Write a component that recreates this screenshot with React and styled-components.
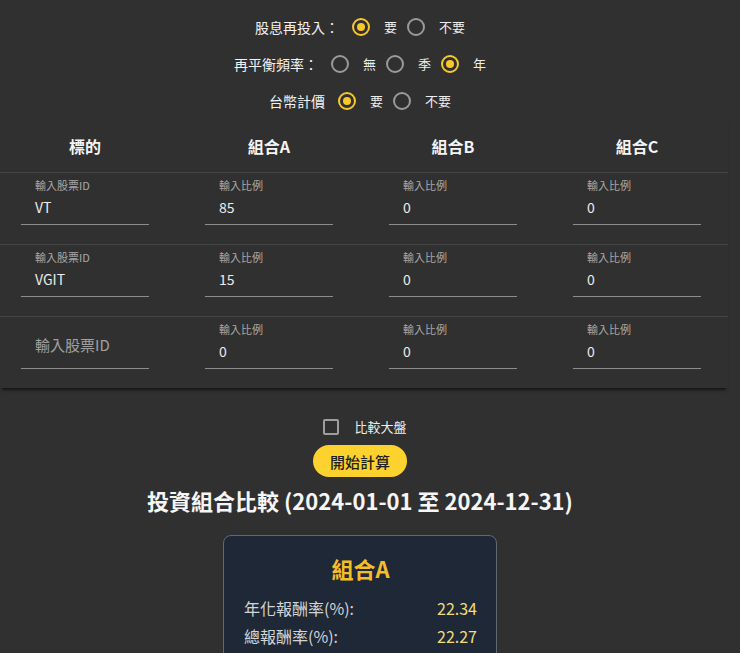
import React from "react";
import styled, { createGlobalStyle } from "styled-components";

const GlobalStyle = createGlobalStyle`
  body {
    margin: 0;
    background-color: #303030;
    font-family: "Noto Sans CJK TC", "Noto Sans", sans-serif;
    color: #f0f0f0;
    overflow: hidden;
  }
`;

const Page = styled.div`
  width: 720px;
  display: flex;
  flex-direction: column;
  align-items: center;
  padding-top: 8px;
`;

/* 上方設定選項 */
const OptionRow = styled.div`
  height: 37px;
  display: flex;
  align-items: center;
  justify-content: center;
`;

const OptionLabel = styled.span`
  font-size: 14px;
  margin-right: 13px;
  color: #f2f2f2;
`;

const RadioCircle = styled.span`
  width: 18px;
  height: 18px;
  box-sizing: border-box;
  border-radius: 50%;
  border: 2px solid ${({ $checked }) => ($checked ? "#f7c72c" : "#9a9a9a")};
  display: inline-flex;
  align-items: center;
  justify-content: center;
  margin-right: 14px;

  &::after {
    content: "";
    width: 8px;
    height: 8px;
    border-radius: 50%;
    background: #f7c72c;
    display: ${({ $checked }) => ($checked ? "block" : "none")};
  }
`;

const RadioText = styled.span`
  font-size: 13px;
  margin-right: 10px;
  color: #eeeeee;

  &:last-child {
    margin-right: 0;
  }
`;

/* 表格區塊 */
const Panel = styled.div`
  width: 728px;
  align-self: flex-start;
  overflow: hidden;
  background-color: #303030;
  box-shadow: 0 4px 3px -2px rgba(0, 0, 0, 0.6);
`;

const Grid = styled.div`
  display: grid;
  grid-template-columns: repeat(4, 184px);
  margin-left: -7px;
`;

const HeadCell = styled.div`
  height: 53px;
  display: flex;
  align-items: center;
  justify-content: center;
  font-size: 16px;
  font-weight: 700;
  color: #f4f4f4;
  border-bottom: 1px solid #444444;
`;

const Cell = styled.div`
  padding: 5px 28px 19px;
  border-bottom: ${({ $last }) => ($last ? "none" : "1px solid #444444")};
`;

const Field = styled.div`
  height: 47px;
  box-sizing: border-box;
  border-bottom: 1px solid #8c8c8c;
  display: flex;
  flex-direction: column;
  justify-content: space-between;
  padding-left: 14px;
`;

const FieldLabel = styled.span`
  font-size: 11px;
  line-height: 14px;
  color: #a8a8a8;
`;

const FieldValue = styled.span`
  font-size: ${({ $placeholder }) => ($placeholder ? "15px" : "14px")};
  line-height: 20px;
  padding-bottom: ${({ $placeholder }) => ($placeholder ? "13px" : "7px")};
  margin-top: ${({ $placeholder }) => ($placeholder ? "auto" : "0")};
  color: ${({ $placeholder }) => ($placeholder ? "#a0a0a0" : "#ececec")};
`;

/* 下方操作區 */
const CheckRow = styled.label`
  margin-top: 29px;
  padding-left: 10px;
  display: flex;
  align-items: center;
  gap: 15px;
  font-size: 13px;
  color: #eeeeee;
`;

const CheckBox = styled.span`
  width: 16px;
  height: 16px;
  box-sizing: border-box;
  border: 2px solid #9e9e9e;
  border-radius: 2px;
`;

const StartButton = styled.button`
  margin-top: 9px;
  height: 32px;
  padding: 0 17px;
  border: none;
  border-radius: 16px;
  background-color: #fdd22e;
  color: #1f1f1f;
  font-family: inherit;
  font-size: 15px;
  font-weight: 500;
`;

const Title = styled.h2`
  margin: 6px 0 0;
  font-size: 22px;
  font-weight: 700;
  line-height: 34px;
  color: #f6f6f6;
`;

const Card = styled.div`
  margin-top: 18px;
  width: 274px;
  box-sizing: border-box;
  padding: 17px 19px 20px 20px;
  background-color: #1e2836;
  border: 1px solid #606874;
  border-radius: 8px;
`;

const CardTitle = styled.div`
  text-align: center;
  font-size: 22px;
  font-weight: 700;
  line-height: 30px;
  color: #f6bd2b;
  margin-bottom: 11px;
`;

const StatRow = styled.div`
  display: flex;
  justify-content: space-between;
  line-height: 28px;
  font-size: 16px;
`;

const StatLabel = styled.span`
  color: #d4d4d4;
`;

const StatValue = styled.span`
  color: #f2dc7c;
`;

const options = [
  { label: "股息再投入：", choices: ["要", "不要"], checked: 0 },
  { label: "再平衡頻率：", choices: ["無", "季", "年"], checked: 2 },
  { label: "台幣計價", choices: ["要", "不要"], checked: 0 },
];

const rows = [
  { id: "VT", values: ["85", "0", "0"] },
  { id: "VGIT", values: ["15", "0", "0"] },
  { id: "", values: ["0", "0", "0"] },
];

const stats = [
  { label: "年化報酬率(%):", value: "22.34" },
  { label: "總報酬率(%):", value: "22.27" },
];

const App = () => {
  return (
    <>
      <GlobalStyle />
      <Page>
        {options.map((opt) => (
          <OptionRow key={opt.label}>
            <OptionLabel>{opt.label}</OptionLabel>
            {opt.choices.map((c, i) => (
              <React.Fragment key={c}>
                <RadioCircle $checked={i === opt.checked} />
                <RadioText>{c}</RadioText>
              </React.Fragment>
            ))}
          </OptionRow>
        ))}

        <Panel>
          <Grid>
            {["標的", "組合A", "組合B", "組合C"].map((h) => (
              <HeadCell key={h}>{h}</HeadCell>
            ))}
            {rows.map((row, r) => (
              <React.Fragment key={r}>
                <Cell $last={r === rows.length - 1}>
                  <Field>
                    {row.id ? (
                      <>
                        <FieldLabel>輸入股票ID</FieldLabel>
                        <FieldValue>{row.id}</FieldValue>
                      </>
                    ) : (
                      <FieldValue $placeholder>輸入股票ID</FieldValue>
                    )}
                  </Field>
                </Cell>
                {row.values.map((v, i) => (
                  <Cell key={i} $last={r === rows.length - 1}>
                    <Field>
                      <FieldLabel>輸入比例</FieldLabel>
                      <FieldValue>{v}</FieldValue>
                    </Field>
                  </Cell>
                ))}
              </React.Fragment>
            ))}
          </Grid>
        </Panel>

        <CheckRow>
          <CheckBox />
          比較大盤
        </CheckRow>
        <StartButton>開始計算</StartButton>

        <Title>投資組合比較 (2024-01-01 至 2024-12-31)</Title>

        <Card>
          <CardTitle>組合A</CardTitle>
          {stats.map((s) => (
            <StatRow key={s.label}>
              <StatLabel>{s.label}</StatLabel>
              <StatValue>{s.value}</StatValue>
            </StatRow>
          ))}
        </Card>
      </Page>
    </>
  );
};

export default App;
